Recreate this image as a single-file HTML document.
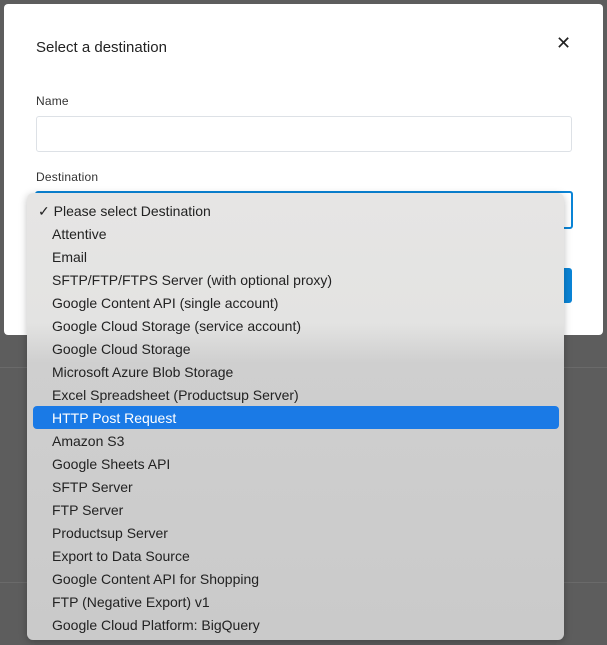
<!DOCTYPE html>
<html><head><style>
body{margin:0;width:607px;height:645px;background:#5d5d5d;position:relative;overflow:hidden;font-family:"Liberation Sans",sans-serif}
.modal{position:absolute;left:4px;top:4px;width:599px;height:331px;background:#fff;border-radius:4px}
.line{position:absolute;left:0;width:607px;height:1px;background:#6a6a6a}
h1{position:absolute;left:32px;top:35px;margin:0;font-size:15px;font-weight:normal;color:#222}
.x{position:absolute;left:552px;top:29px;font-size:18px;color:#222}
.lbl{position:absolute;left:32px;font-size:12px;color:#333;letter-spacing:.2px}
.inp{position:absolute;left:32px;top:112px;width:534px;height:34px;border:1px solid #dde1e6;border-radius:3px}
.sel{position:absolute;left:31px;top:187px;width:534px;height:34px;border:2px solid #0a84d6;border-radius:3px}
.btn{position:absolute;left:550px;top:264px;width:18px;height:35px;background:#0a84d6;border-radius:3px}
.menu{position:absolute;left:27px;top:193px;width:537px;height:447px;border-radius:6px;background:linear-gradient(#e6e5e4 0,#e3e3e2 130px,#cfcfcf 170px,#cacaca 100%);box-shadow:0 2px 8px rgba(0,0,0,.25)}
.it{position:absolute;left:25px;font-size:14px;color:#222;height:23px;line-height:25px}
.hl{position:absolute;left:6px;top:213px;width:526px;height:23px;background:#1a7ae6;border-radius:4px}
</style></head><body>
<div class="line" style="top:367px"></div>
<div class="line" style="top:582px"></div>
<div class="modal">
<h1>Select a destination</h1>
<div class="x">✕</div>
<div class="lbl" style="top:90px">Name</div>
<div class="inp"></div>
<div class="lbl" style="top:166px">Destination</div>
<div class="sel"></div>
<div class="btn"></div>
</div>
<div class="menu">
<div class="hl"></div>
<div class="it" style="top:6px;left:11px">✓ Please select Destination</div>
<div class="it" style="top:29px">Attentive</div>
<div class="it" style="top:52px">Email</div>
<div class="it" style="top:75px">SFTP/FTP/FTPS Server (with optional proxy)</div>
<div class="it" style="top:98px">Google Content API (single account)</div>
<div class="it" style="top:121px">Google Cloud Storage (service account)</div>
<div class="it" style="top:144px">Google Cloud Storage</div>
<div class="it" style="top:167px">Microsoft Azure Blob Storage</div>
<div class="it" style="top:190px">Excel Spreadsheet (Productsup Server)</div>
<div class="it" style="top:213px;color:#fff">HTTP Post Request</div>
<div class="it" style="top:236px">Amazon S3</div>
<div class="it" style="top:259px">Google Sheets API</div>
<div class="it" style="top:282px">SFTP Server</div>
<div class="it" style="top:305px">FTP Server</div>
<div class="it" style="top:328px">Productsup Server</div>
<div class="it" style="top:351px">Export to Data Source</div>
<div class="it" style="top:374px">Google Content API for Shopping</div>
<div class="it" style="top:397px">FTP (Negative Export) v1</div>
<div class="it" style="top:420px">Google Cloud Platform: BigQuery</div>
</div>
</body></html>
